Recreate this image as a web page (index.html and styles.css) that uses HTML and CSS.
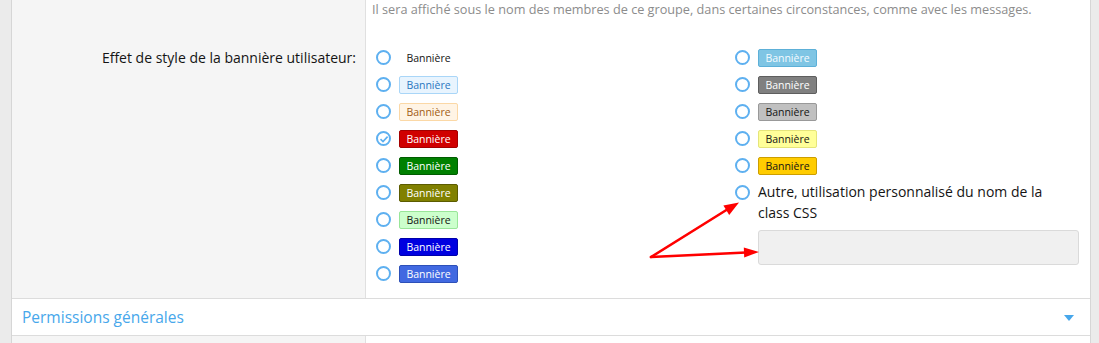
FILE: index.html
```html
<!DOCTYPE html>
<html lang="fr">
<head>
    <meta charset="UTF-8">
    <meta name="viewport" content="width=device-width, initial-scale=1.0">
    <title>Groupe d'utilisateurs</title>
    <link rel="stylesheet" href="styles.css">
</head>
<body>
    <div class="page">
        <div class="form-row">
            <div class="form-label"></div>
            <div class="form-input">
                <p class="explain">Il sera affiché sous le nom des membres de ce groupe, dans certaines circonstances, comme avec les messages.</p>
            </div>
        </div>

        <div class="form-row form-row-main">
            <div class="form-label">
                <label>Effet de style de la bannière utilisateur:</label>
            </div>
            <div class="form-input">
                <div class="choices">
                    <ul class="choice-col">
                        <li class="choice"><span class="radio"></span><span class="banner">Bannière</span></li>
                        <li class="choice"><span class="radio"></span><span class="banner banner-primary">Bannière</span></li>
                        <li class="choice"><span class="radio"></span><span class="banner banner-accent">Bannière</span></li>
                        <li class="choice"><span class="radio checked"><svg width="10" height="10" viewBox="0 0 10 10"><path d="M1.5 5.2 L4 7.6 L8.6 2.6" fill="none" stroke="#5aaef0" stroke-width="1.6"/></svg></span><span class="banner banner-red">Bannière</span></li>
                        <li class="choice"><span class="radio"></span><span class="banner banner-green">Bannière</span></li>
                        <li class="choice"><span class="radio"></span><span class="banner banner-olive">Bannière</span></li>
                        <li class="choice"><span class="radio"></span><span class="banner banner-lightgreen">Bannière</span></li>
                        <li class="choice"><span class="radio"></span><span class="banner banner-blue">Bannière</span></li>
                        <li class="choice"><span class="radio"></span><span class="banner banner-royalblue">Bannière</span></li>
                    </ul>
                    <ul class="choice-col">
                        <li class="choice"><span class="radio"></span><span class="banner banner-skyblue">Bannière</span></li>
                        <li class="choice"><span class="radio"></span><span class="banner banner-gray">Bannière</span></li>
                        <li class="choice"><span class="radio"></span><span class="banner banner-silver">Bannière</span></li>
                        <li class="choice"><span class="radio"></span><span class="banner banner-yellow">Bannière</span></li>
                        <li class="choice"><span class="radio"></span><span class="banner banner-orange">Bannière</span></li>
                        <li class="choice choice-other">
                            <span class="radio"></span>
                            <div class="other">
                                <span class="other-text">Autre, utilisation personnalisé du nom de la class CSS</span>
                                <input type="text" class="input" disabled>
                            </div>
                        </li>
                    </ul>
                </div>
            </div>
        </div>

        <h3 class="block-header">
            <span>Permissions générales</span>
            <span class="toggle"></span>
        </h3>

        <div class="form-row form-row-next">
            <div class="form-label"></div>
            <div class="form-input"></div>
        </div>
    </div>

    <svg class="arrows" width="1099" height="343" viewBox="0 0 1099 343">
        <g stroke="#f00" stroke-width="2.6" stroke-linecap="round">
            <line x1="651" y1="257" x2="728" y2="209"/>
            <line x1="651" y1="257" x2="746" y2="252.5"/>
        </g>
        <g fill="#f00">
            <polygon points="739,202.5 729.2,215 723.4,205.5"/>
            <polygon points="759,252 744.2,257.4 743.8,247.6"/>
        </g>
    </svg>
</body>
</html>
```

FILE: styles.css
```css
body {
    margin: 0;
    background: #ebebeb;
    font-family: "Open Sans", "Noto Sans", sans-serif;
    color: #141414;
    height: 343px;
    overflow: hidden;
}

.page {
    margin: 0 8px 0 11px;
    background: #fff;
    border-left: 1px solid #d6d6d6;
    border-right: 1px solid #d6d6d6;
    min-height: 343px;
}

.form-row {
    display: grid;
    grid-template-columns: 354px 1fr;
}

.form-label {
    background: #f5f5f5;
    border-right: 1px solid #e0e0e0;
    text-align: right;
    padding-right: 9px;
    font-size: 14px;
}

.form-input {
    padding: 0 9px 0 6px;
}

.explain {
    margin: 0;
    padding-bottom: 26px;
    font-size: 12.7px;
    line-height: 18px;
    color: #8c8c8c;
}

.form-row-main {
    border-bottom: 1px solid #dcdcdc;
}

.form-row-main .form-label {
    line-height: 27px;
}

.choices {
    display: grid;
    grid-template-columns: 344px 344px;
    column-gap: 15px;
    padding: 0 0 11px 4px;
}

.choice-col {
    list-style: none;
    margin: 0;
    padding: 0;
}

.choice {
    display: flex;
    align-items: center;
    gap: 8px;
    height: 27px;
}

.radio {
    box-sizing: border-box;
    width: 15px;
    height: 15px;
    border: 2px solid #5eb0f0;
    border-radius: 50%;
    flex-shrink: 0;
    display: flex;
    align-items: center;
    justify-content: center;
}

.banner {
    display: inline-block;
    font-size: 10.5px;
    line-height: 16px;
    padding: 0 6px;
    border: 1px solid transparent;
    border-radius: 2px;
    width: 45px;
    text-align: center;
    color: #141414;
}

.banner-primary { background: #e8f4fe; border-color: #a9d6f8; color: #2a77c0; }
.banner-accent { background: #fff4e5; border-color: #fbd8a6; color: #a25d16; }
.banner-red { background: #d00000; border-color: #a40000; color: #fff; }
.banner-green { background: #008000; border-color: #005c00; color: #fff; }
.banner-olive { background: #808000; border-color: #5c5c00; color: #fff; }
.banner-lightgreen { background: #ccffcc; border-color: #99e699; color: #141414; }
.banner-blue { background: #0000e0; border-color: #0000aa; color: #fff; }
.banner-royalblue { background: #4169e1; border-color: #2d50b8; color: #fff; }
.banner-skyblue { background: #7fc5e4; border-color: #5db0d8; color: #f5fbff; }
.banner-gray { background: #808080; border-color: #5e5e5e; color: #fff; }
.banner-silver { background: #c0c0c0; border-color: #999; color: #141414; }
.banner-yellow { background: #ffff99; border-color: #e5e57a; color: #141414; }
.banner-orange { background: #ffcc00; border-color: #cc9e00; color: #141414; }

.choice-other {
    height: auto;
    align-items: flex-start;
}

.choice-other .radio {
    margin-top: 6px;
}

.other {
    flex: 1;
    display: flex;
    flex-direction: column;
    margin-top: 2px;
}

.other-text {
    font-size: 14px;
    line-height: 21px;
    padding-right: 20px;
}

.input {
    box-sizing: border-box;
    margin-top: 7px;
    height: 35px;
    width: 100%;
    background: #f0f0f0;
    border: 1px solid #dadada;
    border-radius: 3px;
}

.block-header {
    margin: 0;
    height: 36px;
    display: flex;
    align-items: center;
    justify-content: space-between;
    padding: 0 16px 0 10px;
    font-weight: normal;
    font-size: 15.5px;
    color: #47a7eb;
    border-bottom: 1px solid #dcdcdc;
}

.toggle {
    width: 0;
    height: 0;
    border-left: 5px solid transparent;
    border-right: 5px solid transparent;
    border-top: 6px solid #47a7eb;
    margin-top: 1px;
}

.form-row-next {
    height: 20px;
}

.arrows {
    position: absolute;
    left: 0;
    top: 0;
    pointer-events: none;
}
```
